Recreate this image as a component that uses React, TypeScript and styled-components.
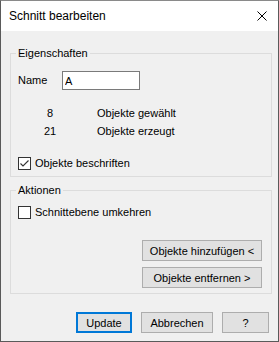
import styled, { createGlobalStyle } from "styled-components";

const GlobalStyle = createGlobalStyle`
  html, body {
    margin: 0;
    padding: 0;
    background: #ffffff;
  }
  * {
    box-sizing: border-box;
  }
`;

const Window = styled.div`
  width: 279px;
  height: 342px;
  border: 1px solid #5a5a5a;
  border-top-color: #8a8a8a;
  background: #f0f0f0;
  display: flex;
  flex-direction: column;
  font-family: "Liberation Sans", Arial, sans-serif;
  font-size: 11px;
  line-height: 15px;
  color: #000000;
`;

const TitleBar = styled.div`
  height: 30px;
  background: #ffffff;
  display: flex;
  align-items: center;
  justify-content: space-between;
  padding: 0 10px 0 8px;
`;

const TitleText = styled.span`
  font-size: 12px;
`;

const CloseIcon = styled.svg`
  width: 10px;
  height: 10px;
  margin-right: 1px;
`;

const Content = styled.div`
  flex: 1;
  display: flex;
  flex-direction: column;
  padding: 0 6px 0 9px;
`;

const Group = styled.fieldset<{ top: number }>`
  margin: ${(p) => p.top}px 0 0 0;
  padding: 0;
  border: 1px solid #dcdcdc;
  min-width: 0;
`;

const Legend = styled.legend`
  margin-left: 5px;
  padding: 0 2px;
  line-height: 14px;
`;

const GroupBody = styled.div<{ bottom: number }>`
  display: flex;
  flex-direction: column;
  padding: 0 9px ${(p) => p.bottom}px 7px;
`;

const NameRow = styled.div`
  display: flex;
  align-items: center;
  margin-top: 11px;
`;

const NameLabel = styled.span`
  width: 44px;
`;

const NameInput = styled.input`
  width: 78px;
  height: 19px;
  border: 1px solid #7a7a7a;
  background: #ffffff;
  padding: 0 2px;
  font-family: "Liberation Sans", Arial, sans-serif;
  font-size: 11px;
  color: #000000;
  outline: none;
`;

const CountGrid = styled.div`
  display: grid;
  grid-template-columns: 64px auto;
  column-gap: 15px;
  row-gap: 3px;
  margin-top: 16px;
`;

const CountNumber = styled.span`
  text-align: center;
`;

const CheckRow = styled.label<{ top: number }>`
  display: flex;
  align-items: center;
  gap: 4px;
  margin-top: ${(p) => p.top}px;
`;

const CheckBox = styled.span`
  width: 13px;
  height: 13px;
  border: 1px solid #333333;
  background: #ffffff;
  display: flex;
  align-items: center;
  justify-content: center;
`;

const ActionButtons = styled.div`
  display: flex;
  flex-direction: column;
  align-items: flex-end;
  gap: 6px;
  margin-top: 20px;
`;

const Button = styled.button<{ w: number; isDefault?: boolean }>`
  width: ${(p) => p.w}px;
  height: 21px;
  padding: 0;
  background: #e1e1e1;
  border: ${(p) => (p.isDefault ? "2px solid #0078d7" : "1px solid #adadad")};
  font-family: "Liberation Sans", Arial, sans-serif;
  font-size: 11px;
  color: #000000;
`;

const Footer = styled.div`
  display: flex;
  justify-content: flex-end;
  gap: 9px;
  margin-top: 18px;
  padding-right: 3px;
`;

const Check = ({ checked }: { checked: boolean }) => (
  <CheckBox>
    {checked && (
      <svg width="11" height="11" viewBox="0 0 11 11">
        <polyline
          points="1.5,5.5 4,8 9.5,2.5"
          fill="none"
          stroke="#333333"
          strokeWidth="1.1"
        />
      </svg>
    )}
  </CheckBox>
);

export default function App() {
  return (
    <>
      <GlobalStyle />
      <Window>
        <TitleBar>
          <TitleText>Schnitt bearbeiten</TitleText>
          <CloseIcon viewBox="0 0 10 10">
            <path d="M0.5 0.5 L9.5 9.5 M9.5 0.5 L0.5 9.5" stroke="#000" strokeWidth="1" />
          </CloseIcon>
        </TitleBar>
        <Content>
          <Group top={15}>
            <Legend>Eigenschaften</Legend>
            <GroupBody bottom={5}>
              <NameRow>
                <NameLabel>Name</NameLabel>
                <NameInput defaultValue="A" />
              </NameRow>
              <CountGrid>
                <CountNumber>8</CountNumber>
                <span>Objekte gewählt</span>
                <CountNumber>21</CountNumber>
                <span>Objekte erzeugt</span>
              </CountGrid>
              <CheckRow top={17}>
                <Check checked />
                <span>Objekte beschriften</span>
              </CheckRow>
            </GroupBody>
          </Group>
          <Group top={6}>
            <Legend>Aktionen</Legend>
            <GroupBody bottom={5}>
              <CheckRow top={8}>
                <Check checked={false} />
                <span>Schnittebene umkehren</span>
              </CheckRow>
              <ActionButtons>
                <Button w={120}>Objekte hinzufügen &lt;</Button>
                <Button w={120}>Objekte entfernen &gt;</Button>
              </ActionButtons>
            </GroupBody>
          </Group>
          <Footer>
            <Button w={56} isDefault>
              Update
            </Button>
            <Button w={72}>Abbrechen</Button>
            <Button w={47}>?</Button>
          </Footer>
        </Content>
      </Window>
    </>
  );
}
